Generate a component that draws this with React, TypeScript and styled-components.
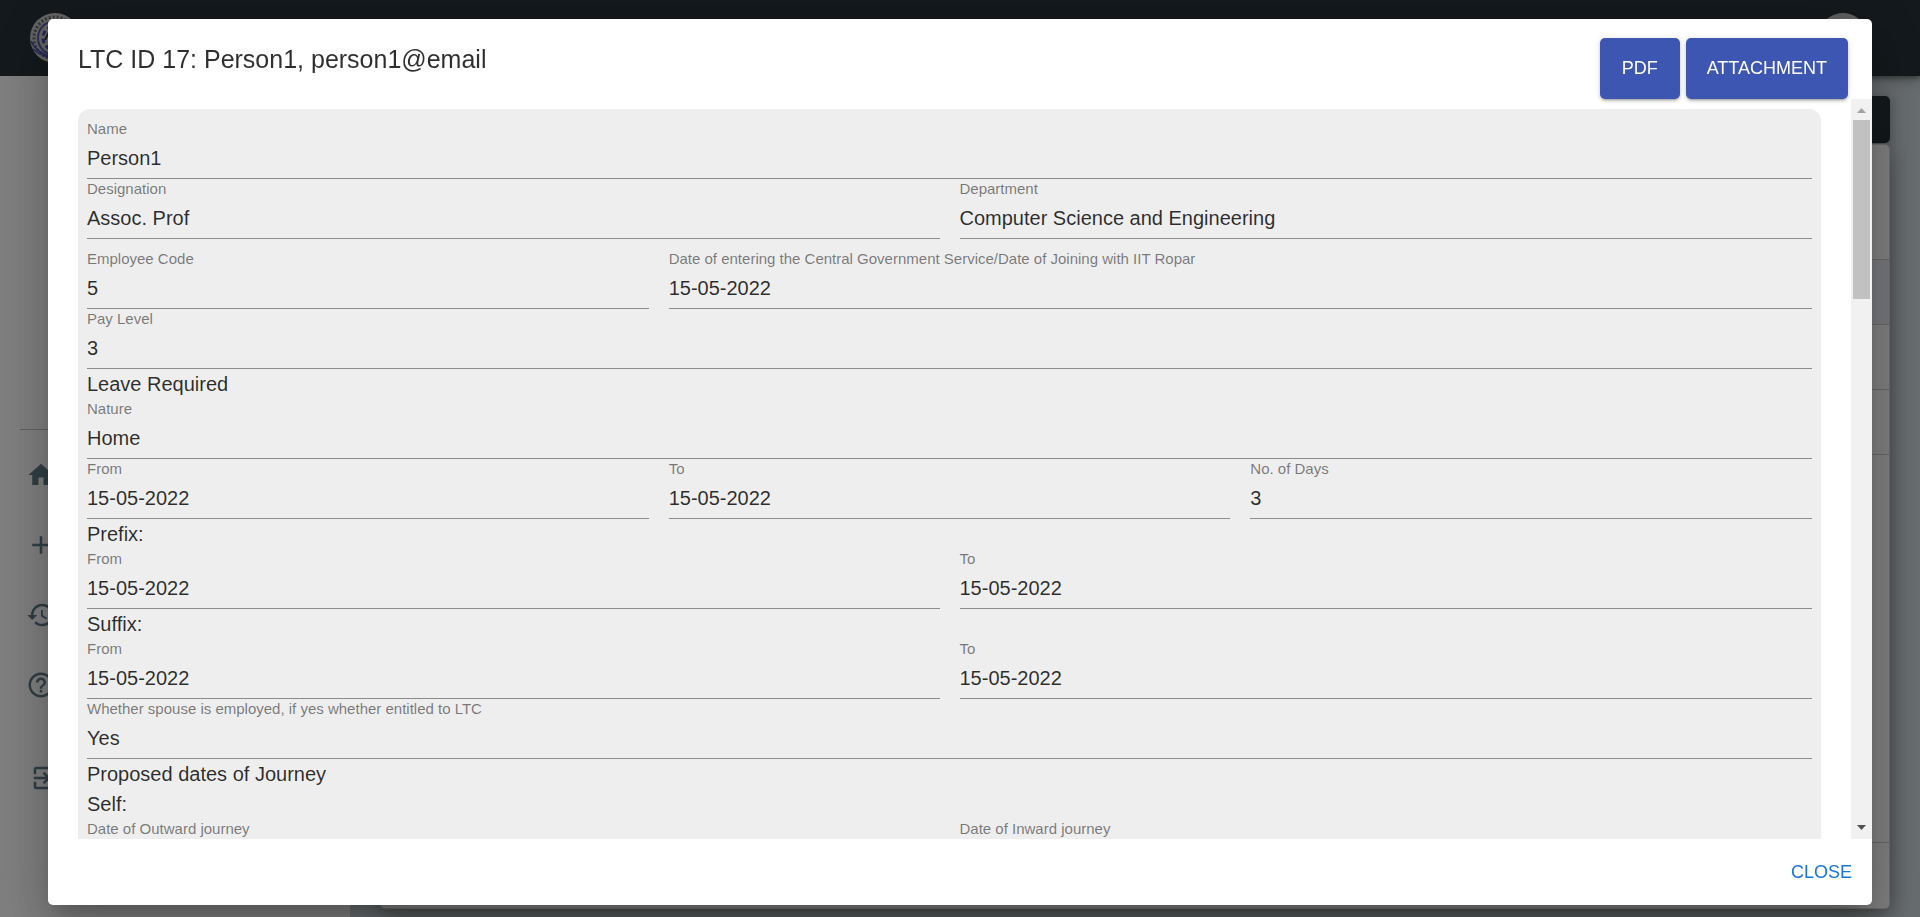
import React, { useId } from "react";
import styled, { createGlobalStyle } from "styled-components";
import { MdAdd, MdExitToApp, MdHelpOutline, MdHistory, MdHome } from "react-icons/md";

const GlobalStyle = createGlobalStyle`
  *, *::before, *::after { box-sizing: border-box; }
  html, body { margin: 0; height: 100%; }
  body {
    font-family: "Liberation Sans", Arial, sans-serif;
    font-size: 20px;
    line-height: 30px;
    color: rgba(0, 0, 0, 0.82);
    overflow: hidden;
  }
  button, input { font-family: inherit; }
`;

/* ---------- page behind the dialog ---------- */

const Page = styled.div`
  height: 100vh;
  display: flex;
  flex-direction: column;
  background: #cfd8dc;
`;

const AppBar = styled.header`
  flex: none;
  height: 76px;
  padding: 0 52px 0 30px;
  display: flex;
  align-items: center;
  justify-content: space-between;
  background: #263238;
  box-shadow: 0 2px 5px rgba(0, 0, 0, 0.4), 0 5px 12px rgba(0, 0, 0, 0.2);
`;

const Avatar = styled.span`
  width: 50px;
  height: 50px;
  border-radius: 50%;
  background: #bdbdbd;
`;

const Body = styled.div`
  flex: 1;
  min-height: 0;
  display: flex;
`;

const Sidebar = styled.nav`
  flex: none;
  width: 350px;
  padding-top: 353px;
  background: #fff;
`;

const NavList = styled.ul`
  list-style: none;
  margin: 0 20px;
  padding: 10px 0 0;
  border-top: 1px solid #c4c4c4;
`;

const NavItem = styled.li<{ $last?: boolean }>`
  height: 70px;
  margin-top: ${(p) => (p.$last ? "23px" : "0")};
  padding-left: ${(p) => (p.$last ? "10px" : "6px")};
  display: flex;
  align-items: center;
`;

const NavLink = styled.a`
  display: flex;
  color: #607d8b;
`;

const Main = styled.main`
  flex: 1;
  min-width: 0;
  padding: 20px 30px 8px;
  display: flex;
  flex-direction: column;
  gap: 1px;
`;

const Banner = styled.div`
  flex: none;
  height: 47px;
  border-radius: 5px;
  background: #263238;
  box-shadow: 0 2px 12px rgba(0, 0, 0, 0.3);
`;

const Card = styled.section`
  flex: 1;
  padding-top: 114px;
  border-radius: 5px;
  border: 1px solid #d8d8d8;
  background: #fff;
  box-shadow: 0 5px 20px rgba(0, 0, 0, 0.4);
`;

const CardRow = styled.div<{ $selected?: boolean; $tall?: boolean }>`
  height: ${(p) => (p.$tall ? "388px" : "65px")};
  border-top: 1px solid #d0d0d0;
  background: ${(p) => (p.$selected ? "#eceef9" : "transparent")};
`;

/* ---------- dialog ---------- */

const Backdrop = styled.div`
  position: fixed;
  inset: 0;
  z-index: 10;
  padding: 19px 48px 12px;
  display: flex;
  background: rgba(0, 0, 0, 0.5);
`;

const Dialog = styled.div`
  flex: 1;
  min-width: 0;
  display: flex;
  flex-direction: column;
  border-radius: 5px;
  background: #fff;
  box-shadow: 0 14px 19px -9px rgba(0, 0, 0, 0.2), 0 30px 48px 4px rgba(0, 0, 0, 0.14),
    0 11px 58px 10px rgba(0, 0, 0, 0.12);
`;

const DialogHeader = styled.div`
  flex: none;
  padding: 19px 24px 0 30px;
  display: flex;
  justify-content: space-between;
`;

const Title = styled.h2`
  margin: 0;
  font-size: 25px;
  font-weight: 400;
  line-height: 42px;
`;

const Actions = styled.div`
  display: flex;
  gap: 6px;
`;

const ActionButton = styled.button`
  height: 61px;
  min-width: 80px;
  padding: 0 21px 2px;
  border: 0;
  border-radius: 5px;
  background: #3d56b2;
  color: #fff;
  font-size: 18px;
  line-height: 30px;
  box-shadow: 0 4px 2px -3px rgba(0, 0, 0, 0.2), 0 2px 3px rgba(0, 0, 0, 0.14), 0 1px 6px rgba(0, 0, 0, 0.12);
`;

const ScrollFrame = styled.div`
  flex: 1;
  min-height: 0;
  display: flex;
`;

const ScrollArea = styled.div`
  flex: 1;
  min-width: 0;
  padding: 10px 30px 0;
  overflow-y: auto;
  scrollbar-width: none;
`;

const Panel = styled.form`
  padding: 10px 9px;
  border-radius: 12px;
  background: #eee;
`;

const FieldRow = styled.div<{ $columns?: string; $spaced?: boolean }>`
  display: grid;
  grid-template-columns: ${(p) => p.$columns ?? "1fr"};
  column-gap: 20px;
  margin-top: ${(p) => (p.$spaced ? "10px" : "0")};
`;

const FieldBox = styled.div<{ $span?: number }>`
  grid-column: span ${(p) => p.$span ?? 1};
  min-width: 0;
  height: 60px;
  display: flex;
  flex-direction: column;
  border-bottom: 1px solid #8b8b8b;
`;

const FieldLabel = styled.label`
  height: 20px;
  font-size: 15px;
  line-height: 20px;
  color: rgba(0, 0, 0, 0.5);
`;

const FieldInput = styled.input`
  width: 100%;
  height: 38px;
  padding: 0;
  border: 0;
  outline: 0;
  background: transparent;
  color: rgba(0, 0, 0, 0.82);
  font-size: 20px;
`;

const SectionText = styled.p`
  margin: 0;
  height: 30px;
  line-height: 30px;
`;

const Scrollbar = styled.div`
  flex: none;
  width: 21px;
  padding: 0 2px;
  display: flex;
  flex-direction: column;
  background: #f1f1f1;
`;

const ScrollArrow = styled.svg`
  flex: none;
  display: block;
  width: 17px;
  height: 21px;
`;

const Track = styled.div`
  flex: 1;
`;

const Thumb = styled.div`
  height: 179px;
  background: #c1c1c1;
`;

const DialogFooter = styled.div`
  flex: none;
  height: 66px;
  padding: 0 10px;
  display: flex;
  align-items: center;
  justify-content: flex-end;
`;

const CloseButton = styled.button`
  height: 46px;
  padding: 0 10px;
  border: 0;
  background: transparent;
  color: #1976d2;
  font-size: 18px;
  line-height: 30px;
`;

const Crest = () => (
  <svg width="50" height="50" viewBox="0 0 50 50" aria-hidden="true">
    <circle cx="25" cy="25" r="25" fill="#c8c8c8" />
    <circle cx="25" cy="25" r="21" fill="none" stroke="#6a6a6a" strokeWidth="3" strokeDasharray="2 2" />
    <circle cx="25" cy="25" r="17" fill="none" stroke="#5a5aae" strokeWidth="2" />
    <circle cx="25" cy="25" r="12" fill="none" stroke="#4a4ab4" strokeWidth="3" strokeDasharray="5 3" />
    <circle cx="25" cy="25" r="10" fill="#c8c8c8" />
    <path d="M15 27l3-6 2 6 3-8 3 8" fill="none" stroke="#333" strokeWidth="2" />
    <path d="M1 28q5 12 22 16M3 36q8 7 18 9" fill="none" stroke="#4a4ab4" strokeWidth="1.5" />
  </svg>
);

type FieldProps = { label: string; value: string; span?: number };

const Field = ({ label, value, span }: FieldProps) => {
  const id = useId();
  return (
    <FieldBox $span={span}>
      <FieldLabel htmlFor={id}>{label}</FieldLabel>
      <FieldInput id={id} type="text" value={value} readOnly />
    </FieldBox>
  );
};

const DATE = "15-05-2022";
const HALVES = "repeat(2, minmax(0, 1fr))";
const THIRDS = "repeat(3, minmax(0, 1fr))";

const NAV = [
  { name: "Home", Icon: MdHome },
  { name: "New", Icon: MdAdd },
  { name: "History", Icon: MdHistory },
  { name: "Help", Icon: MdHelpOutline },
  { name: "Log out", Icon: MdExitToApp },
];

export default function App() {
  return (
    <>
      <GlobalStyle />
      <Page>
        <AppBar>
          <Crest />
          <Avatar />
        </AppBar>
        <Body>
          <Sidebar>
            <NavList>
              {NAV.map(({ name, Icon }, i) => (
                <NavItem key={name} $last={i === NAV.length - 1}>
                  <NavLink href="#" aria-label={name}>
                    <Icon size={30} />
                  </NavLink>
                </NavItem>
              ))}
            </NavList>
          </Sidebar>
          <Main>
            <Banner />
            <Card>
              <CardRow $selected />
              <CardRow />
              <CardRow />
              <CardRow $tall />
              <CardRow />
            </Card>
          </Main>
        </Body>
      </Page>

      <Backdrop>
        <Dialog role="dialog" aria-modal="true" aria-labelledby="dialog-title">
          <DialogHeader>
            <Title id="dialog-title">LTC ID 17: Person1, person1@email</Title>
            <Actions>
              <ActionButton type="button">PDF</ActionButton>
              <ActionButton type="button">ATTACHMENT</ActionButton>
            </Actions>
          </DialogHeader>

          <ScrollFrame>
            <ScrollArea>
              <Panel>
                <FieldRow>
                  <Field label="Name" value="Person1" />
                </FieldRow>
                <FieldRow $columns={HALVES}>
                  <Field label="Designation" value="Assoc. Prof" />
                  <Field label="Department" value="Computer Science and Engineering" />
                </FieldRow>
                <FieldRow $columns={THIRDS} $spaced>
                  <Field label="Employee Code" value="5" />
                  <Field
                    label="Date of entering the Central Government Service/Date of Joining with IIT Ropar"
                    value={DATE}
                    span={2}
                  />
                </FieldRow>
                <FieldRow>
                  <Field label="Pay Level" value="3" />
                </FieldRow>
                <SectionText>Leave Required</SectionText>
                <FieldRow>
                  <Field label="Nature" value="Home" />
                </FieldRow>
                <FieldRow $columns={THIRDS}>
                  <Field label="From" value={DATE} />
                  <Field label="To" value={DATE} />
                  <Field label="No. of Days" value="3" />
                </FieldRow>
                <SectionText>Prefix:</SectionText>
                <FieldRow $columns={HALVES}>
                  <Field label="From" value={DATE} />
                  <Field label="To" value={DATE} />
                </FieldRow>
                <SectionText>Suffix:</SectionText>
                <FieldRow $columns={HALVES}>
                  <Field label="From" value={DATE} />
                  <Field label="To" value={DATE} />
                </FieldRow>
                <FieldRow>
                  <Field label="Whether spouse is employed, if yes whether entitled to LTC" value="Yes" />
                </FieldRow>
                <SectionText>Proposed dates of Journey</SectionText>
                <SectionText>Self:</SectionText>
                <FieldRow $columns={HALVES}>
                  <Field label="Date of Outward journey" value="" />
                  <Field label="Date of Inward journey" value="" />
                </FieldRow>
              </Panel>
            </ScrollArea>
            <Scrollbar aria-hidden="true">
              <ScrollArrow viewBox="0 0 17 21">
                <path d="M4 14h9l-4.500-5z" fill="#a3a3a3" />
              </ScrollArrow>
              <Track>
                <Thumb />
              </Track>
              <ScrollArrow viewBox="0 0 17 21">
                <path d="M4 7h9l-4.500 5z" fill="#505050" />
              </ScrollArrow>
            </Scrollbar>
          </ScrollFrame>

          <DialogFooter>
            <CloseButton type="button">CLOSE</CloseButton>
          </DialogFooter>
        </Dialog>
      </Backdrop>
    </>
  );
}
